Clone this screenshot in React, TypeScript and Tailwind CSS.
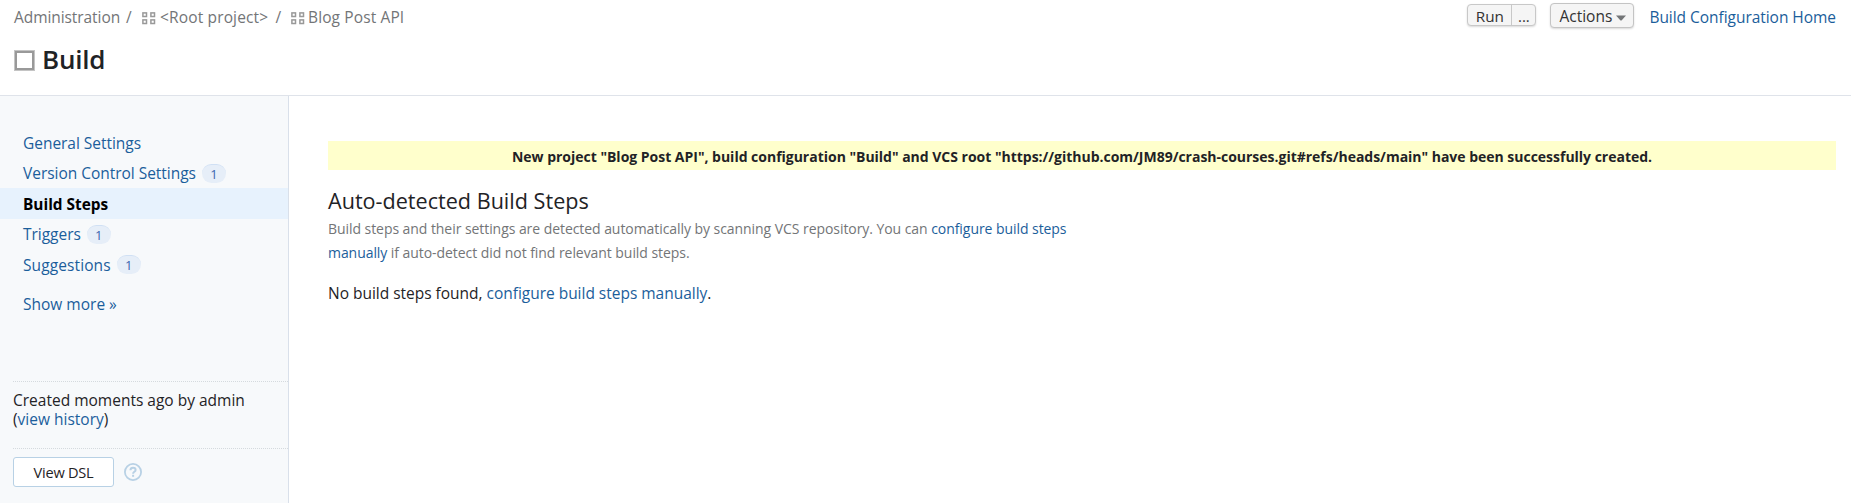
import type { ReactNode } from "react";

function ProjectIcon() {
  return (
    <svg width="14" height="13" viewBox="0 0 14 13" fill="none" stroke="#999" strokeWidth="1.5" className="shrink-0">
      <rect x="0.9" y="0.9" width="3.6" height="3.6" />
      <rect x="8.9" y="0.9" width="3.6" height="3.6" />
      <rect x="0.9" y="7.9" width="3.6" height="3.6" />
      <rect x="8.9" y="7.9" width="3.6" height="3.6" />
    </svg>
  );
}

function Link({ children }: { children: ReactNode }) {
  return <a href="#" className="text-[#1b5e9b]">{children}</a>;
}

const navItems = [
  { label: "General Settings" },
  { label: "Version Control Settings", count: 1 },
  { label: "Build Steps", active: true },
  { label: "Triggers", count: 1 },
  { label: "Suggestions", count: 1, wide: true },
];

function Header() {
  return (
    <header className="h-24 border-b border-[#dfe3ea] bg-white">
      <div className="flex h-[34px] justify-between pr-[15px] pl-[14px]">
        <nav className="flex h-[36px] items-center whitespace-nowrap text-[#737577]">
          <span className="w-[112px] tracking-[-0.07px]">Administration</span>
          <span className="w-4">/</span>
          <ProjectIcon />
          <span className="ml-[4px] w-[115.5px] tracking-[0.15px]">&lt;Root project&gt;</span>
          <span className="w-[15.5px]">/</span>
          <ProjectIcon />
          <span className="ml-[3px] tracking-[0.12px]">Blog Post API</span>
        </nav>
        <div className="flex h-[34px] items-start whitespace-nowrap">
          <div className="mt-1 flex h-[22px] rounded-[4px] border border-[#c8c8c8] bg-[#f5f5f5] text-[#333] shadow-[0_1px_2px_rgba(0,0,0,0.15)]">
            <button className="w-[44px] border-r border-[#c8c8c8] text-[15.3px] leading-[22px]">Run</button>
            <button className="w-[23px] text-[15px] leading-[22px]">...</button>
          </div>
          <button className="mt-[3px] ml-[14px] flex h-[25px] w-[84px] items-center rounded-[4px] border border-[#c4c4c4] bg-[#f5f5f5] pt-[2px] pl-2 text-[#333] shadow-[0_1px_2px_rgba(0,0,0,0.15)]">
            Actions
            <svg width="10" height="6" viewBox="0 0 10 6" className="mt-[2px] ml-[4px]" fill="#737577">
              <path d="M0 0.5h10L5.5 5.5h-1z" />
            </svg>
          </button>
          <span className="ml-[15px] leading-[35px] tracking-[-0.04px]">
            <Link>Build Configuration Home</Link>
          </span>
        </div>
      </div>
      <div className="flex h-[52px] items-center pl-[14px]">
        <span className="size-[21px] border border-[#c4c4c4] p-0">
          <span className="block size-full border-2 border-[#999]" />
        </span>
        <h1 className="ml-[7px] pb-[2px] text-[26px] font-semibold tracking-[-0.2px] text-[#1f2326]">Build</h1>
      </div>
    </header>
  );
}

function Sidebar() {
  return (
    <aside className="flex w-[289px] shrink-0 flex-col border-r border-[#d9e0ea] bg-[#f7f9fb] pt-[31px]">
      <ul>
        {navItems.map((item) => (
          <li
            key={item.label}
            className={
              item.active
                ? "flex h-[30.5px] items-center bg-[#e7f2fd] pt-[2px] pl-[23px] text-[15.4px] font-bold text-black"
                : item.wide
                  ? "flex h-[30.5px] items-center pt-[3px] pl-[23px] tracking-[0.1px]"
                  : "flex h-[30.5px] items-center pt-[2.5px] pl-[23px] tracking-[-0.03px]"
            }
          >
            {item.active ? item.label : <Link>{item.label}</Link>}
            {item.count && (
              <span className="mb-[2px] ml-[6px] h-[19px] w-6 rounded-full border-t border-[#d0e0f4] bg-[#e6eef8] text-center text-[13px] leading-[18px] text-[#3b66b0]">
                {item.count}
              </span>
            )}
          </li>
        ))}
      </ul>
      <div className="mt-[12px] pl-[23px] leading-[24px]">
        <Link>Show more »</Link>
      </div>
      <div className="mt-[65px] ml-[13px] h-[67px] border-t border-dotted border-[#d5dade] pt-[9px] leading-[19.5px] text-[#1f2326]">
        Created moments ago by admin
        <br />(<Link>view history</Link>)
      </div>
      <div className="ml-[13px] flex items-start border-t border-dotted border-[#d5dade] pt-2">
        <button className="h-[30px] w-[101px] rounded-[3px] border border-[#b8d1e5] bg-white pt-[2px] text-[14.6px] tracking-[-0.25px] text-[#1f2326]">
          View DSL
        </button>
        <svg width="18" height="18" viewBox="0 0 18 18" className="mt-[6px] ml-[10px]" fill="none" stroke="#b8d1e5">
          <circle cx="9" cy="9" r="8.1" strokeWidth="1.8" />
          <path d="M6.4 7.2C6.5 5.6 7.5 4.7 9 4.7s2.6.9 2.6 2.2c0 1.9-2.5 1.9-2.5 3.8" strokeWidth="2" />
          <path d="M8.1 12.8h2" strokeWidth="2" />
        </svg>
      </div>
    </aside>
  );
}

function Content() {
  return (
    <main className="grow pt-[45px] pr-[15px] pl-[39px] text-[#1f2326]">
      <div className="h-[29px] bg-[#ffffcc] text-center text-[14px] leading-[31px] font-bold tracking-[-0.015px] whitespace-nowrap">
        New project "Blog Post API", build configuration "Build" and VCS root "https://github.com/JM89/crash-courses.git#refs/heads/main" have been successfully created.
      </div>
      <h2 className="mt-[15px] text-[21.6px] leading-[32px]">Auto-detected Build Steps</h2>
      <p className="w-[760px] text-[14px] leading-[24px] tracking-[-0.06px] text-[#737577]">
        Build steps and their settings are detected automatically by scanning VCS repository. You can{" "}
        <Link>configure build steps</Link>
        <br />
        <Link>manually</Link> if auto-detect did not find relevant build steps.
      </p>
      <p className="mt-4 leading-6 tracking-[-0.02px]">
        No build steps found, <Link>configure build steps manually</Link>.
      </p>
    </main>
  );
}

export default function App() {
  return (
    <div className="flex h-screen flex-col overflow-hidden bg-white font-['Open_Sans','Noto_Sans',sans-serif] text-[15.5px]">
      <Header />
      <div className="flex grow">
        <Sidebar />
        <Content />
      </div>
    </div>
  );
}
